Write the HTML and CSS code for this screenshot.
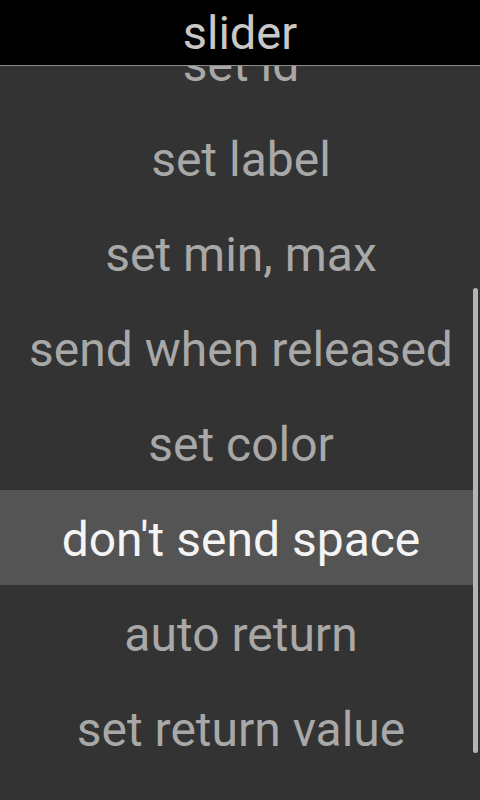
FILE: index.html
```html
<!DOCTYPE html>
<html lang="en">
<head>
    <meta charset="UTF-8">
    <meta name="viewport" content="width=device-width, initial-scale=1.0">
    <title>slider</title>
    <link rel="stylesheet" href="styles.css">
</head>
<body>
    <div class="screen">
        <div class="titlebar">slider</div>
        <div class="listwrap">
            <ul class="menu">
                <li class="item">set id</li>
                <li class="item">set label</li>
                <li class="item">set min, max</li>
                <li class="item">send when released</li>
                <li class="item">set color</li>
                <li class="item selected">don't send space</li>
                <li class="item">auto return</li>
                <li class="item">set return value</li>
            </ul>
            <!-- scrollbar thumb -->
            <div class="thumb"></div>
        </div>
    </div>
</body>
</html>
```

FILE: styles.css
```css
html, body{
    margin: 0;
    padding: 0;
    background: #333333;
}
.screen{
    width: 480px;
    height: 800px;
    overflow: hidden;
    background: #333333;
    font-family: Roboto, "Liberation Sans", sans-serif;
}
.titlebar{
    height: 65px;
    background: #000;
    border-bottom: 1px solid #8c8c8c;
    color: #c8c8c8;
    font-size: 47px;
    line-height: 66px;
    text-align: center;
    position: relative;
    z-index: 2;
}
.listwrap{
    position: relative;
    height: 734px;
    overflow: hidden;
}
.menu{
    list-style: none;
    margin: -51px 0 0 0;
    padding: 0;
    width: 482px;
}
.item{
    height: 95px;
    line-height: 99px;
    text-align: center;
    color: #a8a8a8;
    font-size: 48px;
    white-space: nowrap;
    overflow: hidden;
}
.item.selected{
    background: linear-gradient(to right, #545454 473px, transparent 473px);
    color: #f4f4f4;
}
.thumb{
    position: absolute;
    right: 2px;
    top: 222px;
    width: 5px;
    height: 465px;
    border-radius: 3px;
    background: #b4b4b4;
}
```
